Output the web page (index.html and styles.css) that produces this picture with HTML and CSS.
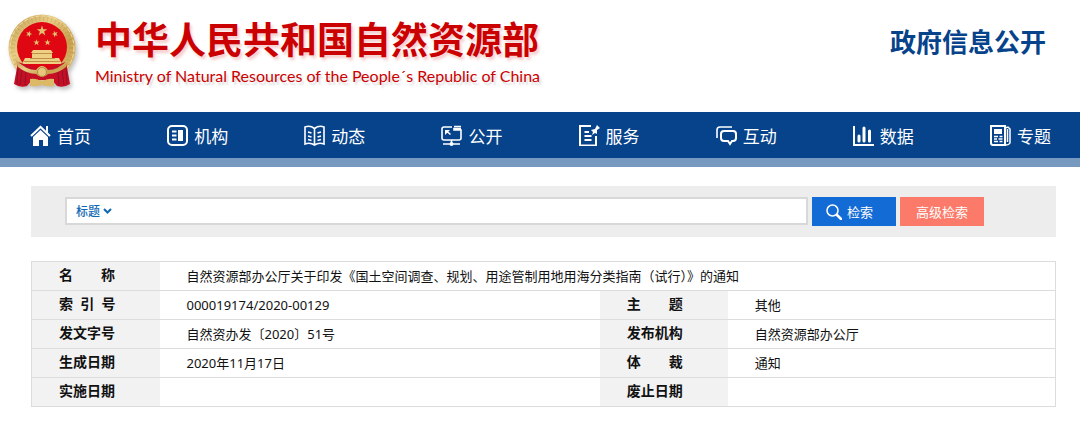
FILE: index.html
```html
<!DOCTYPE html>
<html lang="zh-CN">

<head>
  <meta charset="UTF-8">
  <meta name="viewport" content="width=device-width, initial-scale=1.0">
  <title>政府信息公开</title>
  <link rel="stylesheet" href="styles.css">
</head>

<body>
  <header class="header">
    <svg class="emblem" viewBox="0 0 68 74" aria-hidden="true">
      <defs>
        <linearGradient id="gold" x1="0" y1="0" x2="1" y2="1">
          <stop offset="0" stop-color="#c19a50" />
          <stop offset=".35" stop-color="#e8cd85" />
          <stop offset=".65" stop-color="#c9a14f" />
          <stop offset="1" stop-color="#e6c87c" />
        </linearGradient>
        <path id="star" d="M0-5.6 1.3-1.8H5.3L2.1.6 3.3 4.5 0 2.1-3.3 4.5-2.1.6-5.3-1.8H-1.3Z" />
      </defs>
      <circle cx="34" cy="34" r="33.5" fill="url(#gold)" />
      <circle cx="34" cy="34" r="29.5" fill="none" stroke="#a77f38" stroke-width="5" stroke-dasharray="1 3" opacity=".25" />
      <circle cx="34" cy="34" r="32" fill="none" stroke="#f3dfa8" stroke-width="1" stroke-dasharray="4 2" />
      <circle cx="34" cy="33" r="25" fill="#df0712" />
      <g fill="#e4c171">
        <use href="#star" x="34" y="17" />
        <use href="#star" transform="translate(21 20) rotate(20) scale(.6)" />
        <use href="#star" transform="translate(47 20) rotate(-20) scale(.6)" />
        <use href="#star" transform="translate(28.500 28.500) scale(.6)" />
        <use href="#star" transform="translate(39.500 28.500) scale(.6)" />
      </g>
      <path d="M25 36h18l2 3H23zM24 39h20v6H24zM17 44h34l3 6H14z" fill="#eed085" />
      <path d="M24 39.500h20M22 44.500h25M16 47.500h36" stroke="#a9752b" stroke-width=".7" />
      <path d="M10 48l24 8 24-8 4 22q-6 4-13 2l-5-6H24l-5 6q-7 2-13-2z" fill="#c60f24" />
      <path d="M10 54l-1 16M14 56l-2 15M18 57l-1 14M58 54l1 16M54 56l2 15M50 57l1 14" stroke="#8d1229" stroke-width="1" />
      <path d="M8 46q10 10 20 10 3-4 6-4t6 4q10 0 20-10l-2 7q-9 7-18 7-3 3-6 3t-6-3q-9 0-18-7z" fill="url(#gold)" />
      <path d="M22 65q7-1 12 3 5-4 12-3v7q-7 1-12-1-5 2-12 1z" fill="#dcb967" />
      <circle cx="34" cy="58" r="4.500" fill="#e6c77c" stroke="#9b7433" stroke-width=".6" />
    </svg>
    <div class="brand">
      <h1 class="brand-name">中华人民共和国自然资源部</h1>
      <p class="brand-en">Ministry of Natural Resources of the People´s Republic of China</p>
    </div>
    <h2 class="header-title">政府信息公开</h2>
  </header>

  <nav class="nav">
    <a class="nav-item" href="#">
      <svg class="nav-icon" viewBox="0 0 21 21">
        <path d="M1 11 10.500 2 20 11M17 8V1" fill="none" stroke="#fff" stroke-width="2" />
        <path d="M3 12 10.500 5 18 12v9h-5v-6H9v6H3z" fill="#fff" />
      </svg>首页</a>
    <a class="nav-item" href="#">
      <svg class="nav-icon" viewBox="0 0 21 21">
        <rect x="1" y="1" width="19" height="19" rx="4" fill="none" stroke="#fff" stroke-width="2" />
        <path d="M5 6.500h4.500M5 10.500h4.500M5 14.500h4.500" stroke="#fff" stroke-width="2" />
        <path d="M11 5h5v11h-5z" fill="#fff" />
      </svg>机构</a>
    <a class="nav-item" href="#">
      <svg class="nav-icon" viewBox="0 0 21 21" fill="none" stroke="#fff" stroke-width="1.600">
        <path d="M10.500 3.500Q6 0 1 2v17q5-2 9.500 1 4.500-3 9.500-1V2q-5-2-9.500 1.500zM10.500 3.500V20" />
        <path d="M4 7l3.500 1M4 11l3.500 1M4 14.500l3.500 1M17 7l-3.500 1M17 11l-3.500 1M17 14.500l-3.500 1" />
      </svg>动态</a>
    <a class="nav-item" href="#">
      <svg class="nav-icon" viewBox="0 0 21 21" fill="none" stroke="#fff" stroke-width="1.600">
        <path d="M11 2H3Q1 2 1 4v9q0 2 2 2h15q2 0 2-2V5h-7V3.500h7M13 1.500h7M10.500 15v3M2 19h17M9.500 9.500 5.500 6" />
        <path d="M4 5h5L4 10z" fill="#fff" stroke="none" />
        <circle cx="10.500" cy="19" r="2" fill="#fff" stroke="none" />
      </svg>公开</a>
    <a class="nav-item" href="#">
      <svg class="nav-icon" viewBox="0 0 21 21" fill="none" stroke="#fff" stroke-width="2">
        <path d="M12 1H1v19.500h16V11M5.500 7h4.500M5.500 11h7M5.500 15h7" />
        <path d="M12 5l4-1 2-4 3 3-3 2v4l-2-1-3 2 1-3z" fill="#fff" stroke="none" />
      </svg>服务</a>
    <a class="nav-item" href="#">
      <svg class="nav-icon" viewBox="0 0 21 21" fill="none" stroke="#fff" stroke-width="2">
        <path d="M1 13V5q0-3 3-3h12" stroke-width="1.600" />
        <path d="M8 6h9q3 0 3 3v4q0 3-3 3h-1l-2 3-2-3H8q-3 0-3-3V9q0-3 3-3z" />
      </svg>互动</a>
    <a class="nav-item" href="#">
      <svg class="nav-icon" viewBox="0 0 21 21" fill="none" stroke="#fff">
        <path d="M1 1v19h20" stroke-width="2" />
        <path d="M6 11v5M11 3v13M16.500 6v10" stroke-width="3" stroke-linecap="round" />
      </svg>数据</a>
    <a class="nav-item" href="#">
      <svg class="nav-icon" viewBox="0 0 21 21" fill="none" stroke="#fff" stroke-width="1.500">
        <path d="M1 1h14v19H3q-2 0-2-2z" stroke-width="2" />
        <path d="M15 3l3-1 2 2v14q-1 2-4 2M17.500 4v13" />
        <path d="M4 4h8v5H4z" fill="#fff" stroke="none" />
        <path d="M4 11.500h4M9.500 11.500h3M4 14h3M8.500 14h4M4 16.500h4M9.500 16.500h3" />
      </svg>专题</a>
  </nav>

  <main class="main">
    <form class="search">
      <div class="search-box">
        <select class="search-type" aria-label="检索范围">
          <option>标题</option>
        </select>
        <svg class="search-arrow" viewBox="0 0 9 7" aria-hidden="true">
          <path d="M1 1l3.500 3.500L8 1" fill="none" stroke="#0e68b4" stroke-width="2" />
        </svg>
        <input class="search-input" type="text" aria-label="检索词">
      </div>
      <button class="btn btn-search" type="submit">
        <svg class="btn-icon" viewBox="0 0 16 16" fill="none" stroke="#fff" aria-hidden="true">
          <circle cx="6.500" cy="6.500" r="5.500" stroke-width="1.500" />
          <path d="M11 11l4 4" stroke-width="2.500" stroke-linecap="round" />
        </svg>检索</button>
      <button class="btn btn-advanced" type="button">高级检索</button>
    </form>

    <table class="info">
      <colgroup>
        <col class="col-label">
        <col>
        <col class="col-label">
        <col class="col-side">
      </colgroup>
      <tr>
        <th scope="row">名　　称</th>
        <td colspan="3">自然资源部办公厅关于印发《国土空间调查、规划、用途管制用地用海分类指南（试行）》的通知</td>
      </tr>
      <tr>
        <th scope="row">索&nbsp;&nbsp;引&nbsp;&nbsp;号</th>
        <td>000019174/2020-00129</td>
        <th scope="row">主　　题</th>
        <td>其他</td>
      </tr>
      <tr>
        <th scope="row">发文字号</th>
        <td>自然资办发〔2020〕51号</td>
        <th scope="row">发布机构</th>
        <td>自然资源部办公厅</td>
      </tr>
      <tr>
        <th scope="row">生成日期</th>
        <td>2020年11月17日</td>
        <th scope="row">体　　裁</th>
        <td>通知</td>
      </tr>
      <tr>
        <th scope="row">实施日期</th>
        <td></td>
        <th scope="row">废止日期</th>
        <td></td>
      </tr>
    </table>
  </main>
</body>

</html>
```
FILE: styles.css
```css
* {
  box-sizing: border-box;
}

body {
  margin: 0;
  background: #fff;
  color: #111;
  font-family: "Noto Sans", "Noto Sans CJK SC", sans-serif;
  font-size: 13px;
}

.header {
  display: flex;
  align-items: flex-start;
  height: 112px;
  padding: 14px 34px 0 8px;
}

.emblem {
  width: 68px;
  height: 74px;
  margin-right: 19px;
  filter: drop-shadow(2px 3px 2px rgba(0, 0, 0, 0.25));
}

.brand {
  flex: 1;
  color: #cb0000;
}

.brand-name {
  margin: 0;
  font-size: 37px;
  line-height: 52px;
  font-weight: bold;
  white-space: nowrap;
  text-shadow: 2px 3px 3px rgba(203, 0, 0, 0.2);
}

.brand-en {
  margin: 0;
  font-family: Lato, "Noto Sans", sans-serif;
  font-size: 16px;
  line-height: 20px;
  text-shadow: 2px 3px 2px rgba(0, 0, 0, 0.15);
}

.header-title {
  margin: 0;
  color: #07438b;
  font-size: 26px;
  line-height: 56px;
  font-weight: bold;
}

.nav {
  display: flex;
  justify-content: space-between;
  align-items: center;
  height: 55px;
  padding: 0 29px 0 30px;
  background: #07438b;
  border-bottom: 9px solid #7799c0;
}

.nav-item {
  display: flex;
  align-items: center;
  gap: 6px;
  color: #fff;
  font-size: 17px;
  text-decoration: none;
}

.nav-icon {
  width: 21px;
  height: 21px;
}

.main {
  padding: 19px 24px 15px 31px;
}

.search {
  display: flex;
  gap: 4px;
  height: 51px;
  margin-bottom: 24px;
  padding: 11px 72px 0 34px;
  background: #ededed;
}

.search-box {
  display: flex;
  align-items: center;
  flex: 1;
  height: 28px;
  background: #fff;
  border: 2px solid #d8d8d8;
}

.search-type {
  appearance: none;
  margin: 0 2px 0 9px;
  padding: 0;
  background: none;
  border: none;
  color: #0e68b4;
  font: inherit;
  font-size: 12px;
  font-weight: 500;
}

.search-arrow {
  width: 9px;
  height: 7px;
}

.search-input {
  flex: 1;
  height: 24px;
  padding: 0 8px;
  border: none;
  background: none;
  font: inherit;
  outline: none;
}

.btn {
  display: flex;
  align-items: center;
  justify-content: center;
  gap: 5px;
  width: 84px;
  height: 29px;
  padding: 0;
  background: #136bd5;
  border: none;
  color: #fff;
  font: inherit;
  cursor: pointer;
}

.btn-search {
  padding-right: 9px;
}

.btn-icon {
  width: 16px;
  height: 16px;
}

.btn-advanced {
  background: #fc7a69;
}

.info {
  width: 100%;
  border-collapse: collapse;
  table-layout: fixed;
  border: 1px solid #dcdcdc;
}

.info tr {
  border-bottom: 1px solid #dcdcdc;
}

.col-label {
  width: 128px;
}

.col-side {
  width: 32%;
}

.info th {
  padding: 3px 0 5px 27px;
  background: #f2f2f2;
  font-size: 14px;
  line-height: 20px;
  text-align: left;
}

.info td {
  padding: 4px 0 4px 27px;
  line-height: 20px;
}

.info tr:first-child td {
  white-space: nowrap;
}
```
